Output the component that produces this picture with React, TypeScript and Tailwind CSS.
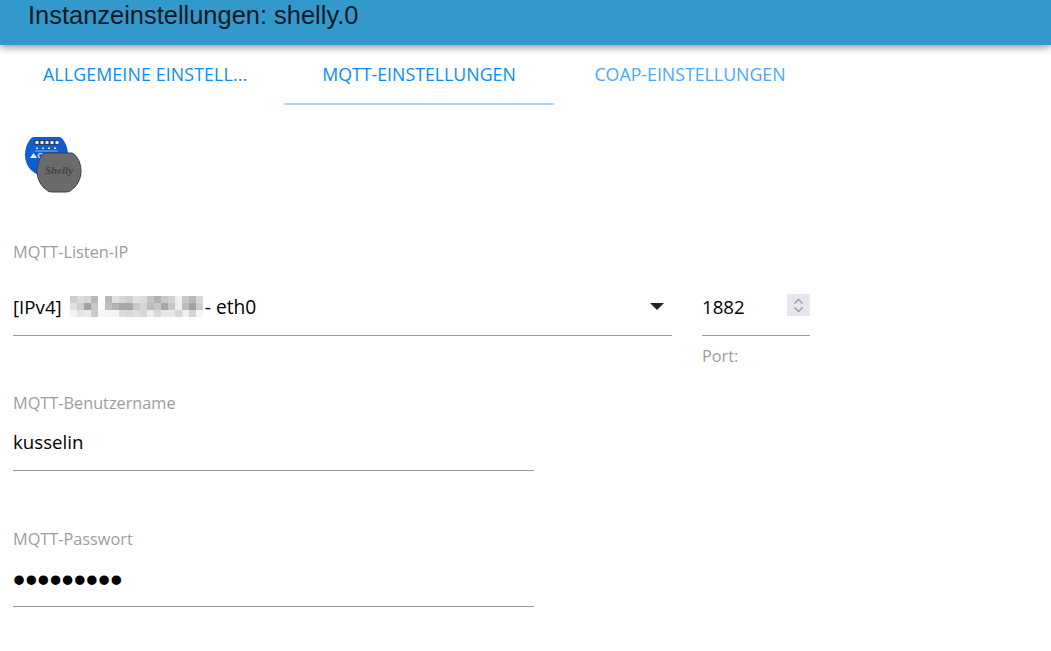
const grid = [
  ["#cdcdcd","#dcdcdc","#d5d5d5","#b8b8b8","#ffffff","#b9b9b9","#e2e2e2","#d6d6d6","#cfcfcf","#e0e0e0","#dcdcdc","#c5c5c5","#b0b0b0","#c8c8c8","#d0d0d0","#f0f0f0","#c8c8c8","#b8b8b8","#d8d8d8"],
  ["#e0e0e0","#cfcfcf","#a3a3a3","#c6c6c6","#fdfdfd","#bfbfbf","#b2b2b2","#a8a8a8","#a8a8a8","#c8c8c8","#d5d5d5","#bcbcbc","#c8c8c8","#a6a6a6","#c6c6c6","#eeeeee","#bcbcbc","#a2a2a2","#cecece"],
  ["#f2f2f2","#e4e4e4","#e8e8e8","#c9c9c9","#f5f5f5","#f5f5f5","#f4f4f4","#dcdcdc","#d8d8d8","#dedede","#d6d6d6","#ececec","#d8d8d8","#e8e8e8","#e8e8e8","#d6d6d6","#eeeeee","#d2d2d2","#f4f4f4"],
];

function Blur() {
  return (
    <svg width="133" height="21" viewBox="0 0 133 21" className="block" shapeRendering="crispEdges">
      {grid.map((row, y) =>
        row.map((c, x) => <rect key={`${x}-${y}`} x={x * 7} y={y * 7} width="7" height="7" fill={c} />)
      )}
    </svg>
  );
}

function Device() {
  return (
    <svg width="57" height="56" viewBox="0 0 57 56" className="block">
      <path d="M8 0 H35 C40 3 43 11 43 18 C43 30 33 39 21 39 C9 39 0 30 0 18 C0 11 3 3 8 0 Z" fill="#0c5fd2" />
      <rect x="9" y="3" width="25" height="5" fill="#24406e" />
      <g fill="#e6edfa">
        <rect x="10.500" y="4" width="3" height="3" />
        <rect x="15.500" y="4" width="3" height="3" />
        <rect x="20.500" y="4" width="3" height="3" />
        <rect x="25.500" y="4" width="3" height="3" />
        <rect x="30.500" y="4" width="3" height="3" />
        <rect x="11" y="10.500" width="2" height="1.500" />
        <rect x="17" y="10.500" width="2" height="1.500" />
        <rect x="23" y="10.500" width="2" height="1.500" />
        <rect x="29" y="10.500" width="2" height="1.500" />
        <rect x="10" y="13.500" width="23" height="1" opacity="0.6" />
        <path d="M5 21 L8.500 16 L12 21 Z" />
      </g>
      <text x="12.500" y="21" fontSize="7" fontFamily="Liberation Sans, sans-serif" fontWeight="700" fill="#e6edfa">C</text>
      <path d="M20 16 H47 C53 19 56 27 56 34 C56 42 52 49 47 52.500 C45 54.500 43 55 40 55 H28 C25 55 23 54.500 21 52.500 C16 49 12 42 12 34 C12 27 15 19 20 16 Z" fill="#6b6b6b" stroke="#3f3f3f" strokeWidth="1" />
      <text x="34" y="37" textAnchor="middle" fontSize="11" fontStyle="italic" fontWeight="700" fontFamily="Liberation Serif, serif" fill="#424242">Shelly</text>
    </svg>
  );
}

function Label({ children, className = "" }: { children: React.ReactNode; className?: string }) {
  return <div className={`text-[16.3px] leading-5 text-[#9c9c9c] ${className}`}>{children}</div>;
}

export default function App() {
  return (
    <div className="w-[1051px] h-[651px] overflow-hidden bg-white font-['Open_Sans','Noto_Sans',sans-serif] text-black">
      <header className="h-[45px] bg-[#3399cc] pl-[28px] shadow-[0_2px_8px_rgba(0,0,0,0.45)] relative">
        <h1 className="font-['Liberation_Sans',sans-serif] text-[25.45px] leading-[31px] font-normal text-[#0f1a20]">Instanzeinstellungen: shelly.0</h1>
      </header>
      <nav className="flex h-[60px] text-[17.75px] text-[#0a8bfb]">
        <div className="w-[284px] pl-[43px] pt-[19px] leading-5 tracking-[0.14px]">ALLGEMEINE EINSTELL...</div>
        <div className="w-[270px] h-[60px] border-b-2 border-[#a6d6fa] text-center pt-[19px] leading-5">MQTT-EINSTELLUNGEN</div>
        <div className="w-[272px] text-center pt-[19px] leading-5 text-[#4aa8fc]">COAP-EINSTELLUNGEN</div>
      </nav>
      <main className="px-[13px]">
        <div className="pt-[32px] pl-[12px] h-[127px]"><Device /></div>
        <div className="flex gap-[30px] pt-[10px]">
          <div className="w-[659px]">
            <Label>MQTT-Listen-IP</Label>
            <div className="h-[74px] flex items-center border-b border-[#9a9a9a] text-[18.7px]">
              <span className="mt-[17px] flex items-center flex-1 min-w-0">
                <span>[IPv4]</span>
                <span className="ml-[8px] mr-[2px]"><Blur /></span>
                <span className="text-[19.2px]">- eth0</span>
              </span>
              <span className="mt-[15px] mr-[8px] w-0 h-0 border-x-[7px] border-x-transparent border-t-[7px] border-t-[#222]" />
            </div>
          </div>
          <div className="w-[108px] pt-[20px]">
            <div className="h-[74px] flex items-center border-b border-[#9a9a9a] text-[18.7px]">
              <span className="flex-1 mt-[17px]">1882</span>
              <span className="mt-[13px] w-[23px] h-[22px] bg-[#e6e6ee] flex flex-col items-center justify-center gap-[1px]">
                <svg width="11" height="7" viewBox="0 0 11 7" fill="none" stroke="#9a9a9a" strokeWidth="1.4"><path d="M1.500 5.500 L5.500 1.500 L9.500 5.500" /></svg>
                <svg width="11" height="7" viewBox="0 0 11 7" fill="none" stroke="#9a9a9a" strokeWidth="1.4"><path d="M1.500 1.500 L5.500 5.500 L9.500 1.500" /></svg>
              </span>
            </div>
            <Label className="mt-[10px]">Port:</Label>
          </div>
        </div>
        <div className="w-[521px]">
          <Label className="mt-[27px]">MQTT-Benutzername</Label>
          <div className="h-[58px] border-b border-[#9a9a9a] text-[18.7px] leading-[28px] pt-[15px]">kusselin</div>
          <Label className="mt-[58px]">MQTT-Passwort</Label>
          <div className="h-[58px] overflow-hidden border-b border-[#9a9a9a] font-['Liberation_Sans',sans-serif] text-[34.7px] leading-[28px] pt-[17px]">•••••••••</div>
        </div>
      </main>
    </div>
  );
}
